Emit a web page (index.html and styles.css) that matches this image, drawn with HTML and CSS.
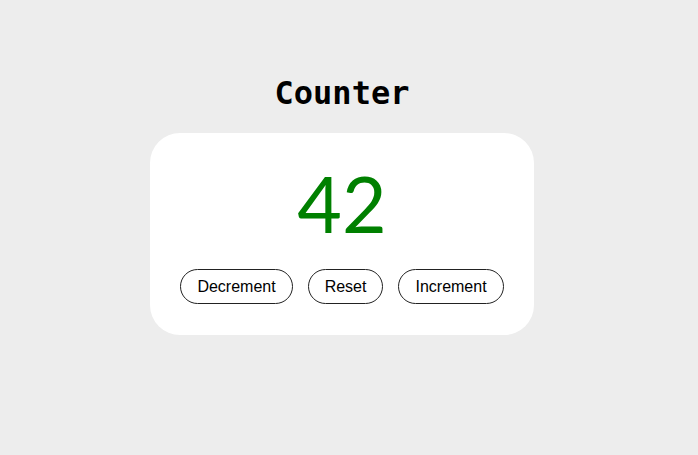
FILE: index.html
```html
<!DOCTYPE html>
<html>
<head>
<meta charset="utf-8">
<link rel="stylesheet" href="styles.css">
</head>
<body>
<main class="page">
  <h1 class="title">Counter</h1>
  <section class="card">
    <div class="count">42</div>
    <div class="actions">
      <button class="btn">Decrement</button>
      <button class="btn">Reset</button>
      <button class="btn">Increment</button>
    </div>
  </section>
</main>
</body>
</html>
```
FILE: styles.css
```css
html, body {
  margin: 0;
  padding: 0;
  background: #ededed;
}
.page {
  display: flex;
  flex-direction: column;
  align-items: center;
  padding-top: 73px;
  padding-right: 14px;
}
.title {
  margin: 0;
  font-family: "DejaVu Sans Mono", monospace;
  font-weight: bold;
  font-size: 32px;
  line-height: 40px;
  color: #000;
}
.card {
  margin-top: 20px;
  width: 384px;
  height: 202px;
  box-sizing: border-box;
  background: #fff;
  border-radius: 30px;
  display: flex;
  flex-direction: column;
  align-items: center;
  padding-top: 25px;
}
.count {
  font-family: Lato, sans-serif;
  font-weight: 400;
  font-size: 77px;
  line-height: 90px;
  color: #008000;
}
.actions {
  margin-top: 21px;
  display: flex;
  gap: 15px;
}
.btn {
  font-family: "Liberation Sans", Arial, sans-serif;
  font-size: 16px;
  color: #000;
  background: #fff;
  border: 1px solid #222;
  border-radius: 999px;
  height: 35px;
  padding: 0 16px;
}
```
